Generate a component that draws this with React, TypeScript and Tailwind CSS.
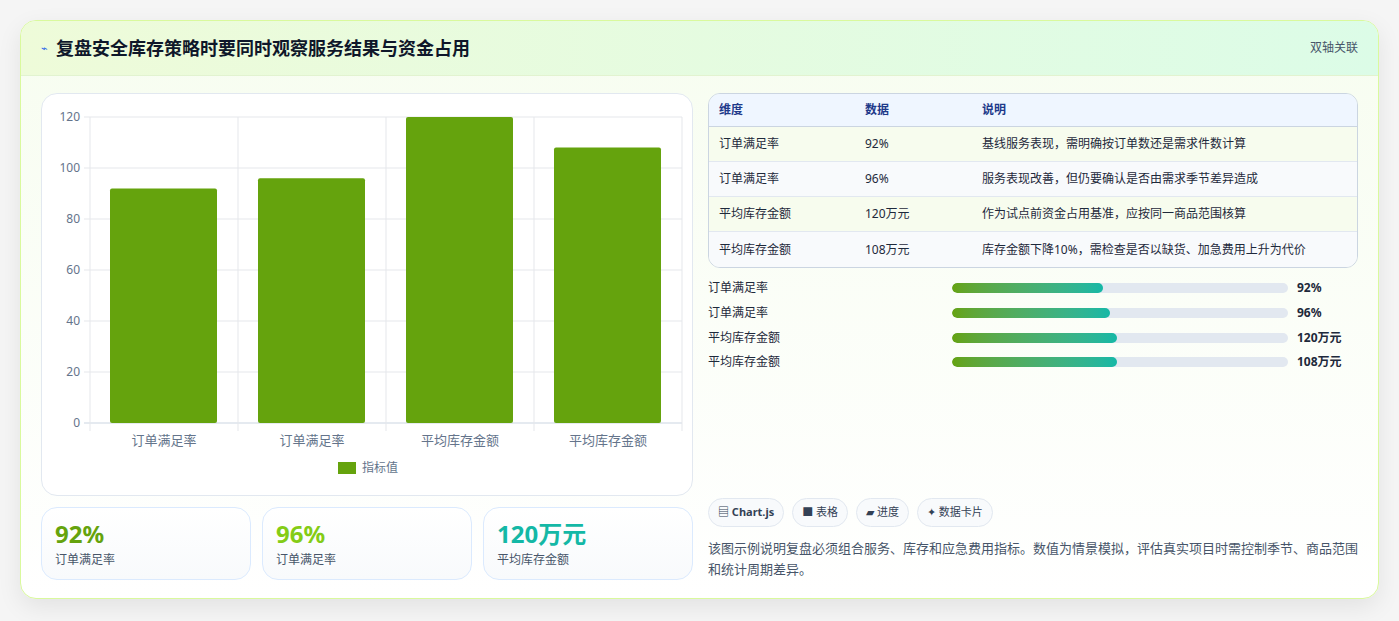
import React from 'react';

const font = { fontFamily: '"Noto Sans", "Noto Sans CJK SC", sans-serif' };

const rows = [
  { k: '订单满足率', v: '92%', d: '基线服务表现，需明确按订单数还是需求件数计算' },
  { k: '订单满足率', v: '96%', d: '服务表现改善，但仍要确认是否由需求季节差异造成' },
  { k: '平均库存金额', v: '120万元', d: '作为试点前资金占用基准，应按同一商品范围核算' },
  { k: '平均库存金额', v: '108万元', d: '库存金额下降10%，需检查是否以缺货、加急费用上升为代价' },
];

const bars = [
  { k: '订单满足率', v: '92%', w: '45%' },
  { k: '订单满足率', v: '96%', w: '47%' },
  { k: '平均库存金额', v: '120万元', w: '49%' },
  { k: '平均库存金额', v: '108万元', w: '49%' },
];

function Chart() {
  // card-relative coords: plot x 48..640, y 23 (120) .. 329 (0)
  const x0 = 48, x1 = 640, yTop = 23, yBot = 329;
  const y = (v: number) => yBot - (v / 120) * (yBot - yTop);
  const cw = (x1 - x0) / 4;
  const vals = [92, 96, 120, 108];
  const labels = ['订单满足率', '订单满足率', '平均库存金额', '平均库存金额'];
  return (
    <svg width="652" height="401" className="block" style={font}>
      {[0, 20, 40, 60, 80, 100, 120].map((t) => (
        <g key={t}>
          <line x1={x0 - 6} x2={x1} y1={y(t)} y2={y(t)} stroke={t === 0 ? '#cbd5e1' : '#e5e7eb'} />
          <text x={x0 - 10} y={y(t) + 4} textAnchor="end" fontSize="12" fill="#64748b">{t}</text>
        </g>
      ))}
      {[0, 1, 2, 3, 4].map((i) => (
        <line key={i} x1={x0 + i * cw} x2={x0 + i * cw} y1={yTop} y2={yBot + 8} stroke="#e5e7eb" />
      ))}
      {vals.map((v, i) => (
        <g key={i}>
          <rect x={x0 + i * cw + 20} y={y(v)} width={107} height={yBot - y(v)} rx="2" fill="#65a30d" />
          <text x={x0 + i * cw + cw / 2} y={351} textAnchor="middle" fontSize="13" fill="#64748b">{labels[i]}</text>
        </g>
      ))}
      <rect x={296} y={368} width={18} height={12} fill="#65a30d" />
      <text x={320} y={378} fontSize="12" fill="#64748b">指标值</text>
    </svg>
  );
}

export default function App() {
  return (
    <div className="min-h-[621px] bg-[#f5f5f5] pt-5 px-5" style={font}>
      <div className="rounded-2xl border border-[#d9f99d] bg-gradient-to-b from-[#f7fdf0] to-white shadow-[0_8px_24px_rgba(0,0,0,0.08)] overflow-hidden">
        <div className="h-[55px] flex items-center justify-between px-5 bg-gradient-to-r from-[#eefbd9] to-[#dcfce7] border-b border-[#e2f3d0]">
          <div className="flex items-center gap-2">
            <span className="text-[11px] text-[#2563eb]">⌁</span>
            <h1 className="text-[18px] font-bold text-[#0f172a]">复盘安全库存策略时要同时观察服务结果与资金占用</h1>
          </div>
          <span className="text-[12px] text-[#475569]">双轴关联</span>
        </div>
        <div className="flex gap-[15px] px-5 pt-[17px] pb-[18px]">
          <div className="w-[652px] flex flex-col gap-[11px]">
            <div className="rounded-2xl border border-[#e2e8f0] bg-white h-[403px]">
              <Chart />
            </div>
            <div className="grid grid-cols-3 gap-[11px]">
              {[
                { v: '92%', k: '订单满足率', c: 'text-[#65a30d]' },
                { v: '96%', k: '订单满足率', c: 'text-[#84cc16]' },
                { v: '120万元', k: '平均库存金额', c: 'text-[#14b8a6]' },
              ].map((s, i) => (
                <div key={i} className="h-[73px] rounded-2xl border border-[#dbeafe] bg-gradient-to-b from-white to-[#f8fafc] px-[13px] pt-[11px]">
                  <div className={`text-[24px] font-bold leading-[30px] ${s.c}`}>{s.v}</div>
                  <div className="text-[12px] text-[#475569] mt-[2px]">{s.k}</div>
                </div>
              ))}
            </div>
          </div>
          <div className="flex-1 flex flex-col">
            <div className="rounded-xl border border-[#cbd5e1] overflow-hidden text-[12px] text-[#1e293b]">
              <div className="flex h-[33px] items-center bg-[#eff6ff] border-b border-[#cbd5e1] text-[#1e3a8a] font-semibold">
                <div className="w-[156px] pl-[10px]">维度</div>
                <div className="w-[117px]">数据</div>
                <div>说明</div>
              </div>
              {rows.map((r, i) => (
                <div key={i} className={`flex h-[35px] items-center ${i < 3 ? 'border-b border-[#e2e8f0]' : ''} ${i % 2 ? 'bg-[#f8fafc]' : 'bg-[#f7fcee]'}`}>
                  <div className="w-[156px] pl-[10px]">{r.k}</div>
                  <div className="w-[117px]">{r.v}</div>
                  <div>{r.d}</div>
                </div>
              ))}
            </div>
            <div className="mt-[8px] flex flex-col">
              {bars.map((b, i) => (
                <div key={i} className="flex items-center h-[24.7px] text-[12px] text-[#1e293b]">
                  <div className="w-[244px]">{b.k}</div>
                  <div className="w-[336px] h-[10px] rounded-full bg-[#e2e8f0] overflow-hidden">
                    <div className="h-full rounded-full bg-gradient-to-r from-[#65a30d] to-[#14b8a6]" style={{ width: b.w }} />
                  </div>
                  <div className="ml-[9px] font-bold">{b.v}</div>
                </div>
              ))}
            </div>
            <div className="flex-1" />
            <div className="flex gap-[8px] text-[11px] text-[#334155]">
              {['▤ Chart.js', '■ 表格', '▰ 进度', '✦ 数据卡片'].map((c, i) => (
                <span key={i} className={`h-[29px] flex items-center px-[9px] rounded-full border border-[#e2e8f0] bg-[#f8fafc] ${i === 0 ? 'font-bold' : ''}`}>{c}</span>
              ))}
            </div>
            <p className="mt-[11px] text-[13px] leading-[21px] text-[#475569]">
              该图示例说明复盘必须组合服务、库存和应急费用指标。数值为情景模拟，评估真实项目时需控制季节、商品范围和统计周期差异。
            </p>
          </div>
        </div>
      </div>
    </div>
  );
}
